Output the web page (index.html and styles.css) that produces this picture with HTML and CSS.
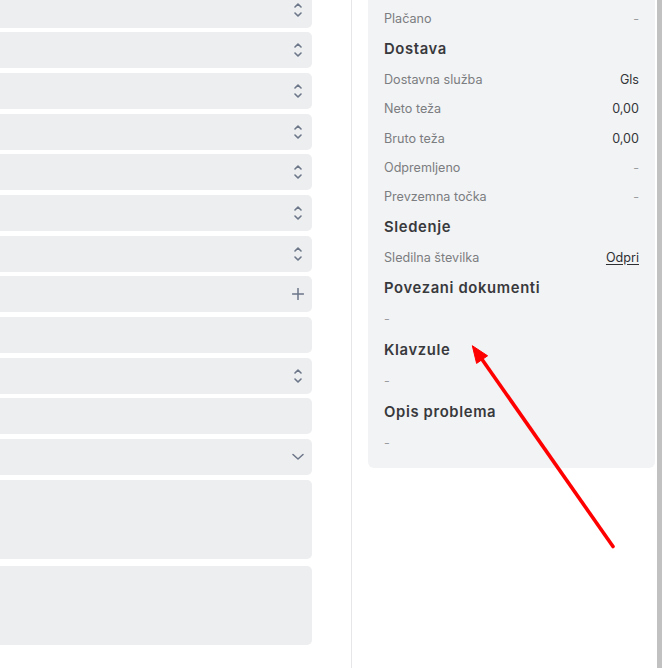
FILE: index.html
```html
<!DOCTYPE html>
<html lang="sl">
<head>
<meta charset="utf-8">
<title>Naročilo</title>
<link rel="stylesheet" href="styles.css">
</head>
<body>
<div class="page">
  <div class="left">
    <div class="fields">
      <div class="field first"><span class="updown"><svg viewBox="0 0 8 14" width="8" height="14"><path d="M1 4 L4 1 L7 4 M1 10 L4 13 L7 10" /></svg></span></div>
      <div class="field"><span class="updown"><svg viewBox="0 0 8 14" width="8" height="14"><path d="M1 4 L4 1 L7 4 M1 10 L4 13 L7 10" /></svg></span></div>
      <div class="field"><span class="updown"><svg viewBox="0 0 8 14" width="8" height="14"><path d="M1 4 L4 1 L7 4 M1 10 L4 13 L7 10" /></svg></span></div>
      <div class="field"><span class="updown"><svg viewBox="0 0 8 14" width="8" height="14"><path d="M1 4 L4 1 L7 4 M1 10 L4 13 L7 10" /></svg></span></div>
      <div class="field"><span class="updown"><svg viewBox="0 0 8 14" width="8" height="14"><path d="M1 4 L4 1 L7 4 M1 10 L4 13 L7 10" /></svg></span></div>
      <div class="field"><span class="updown"><svg viewBox="0 0 8 14" width="8" height="14"><path d="M1 4 L4 1 L7 4 M1 10 L4 13 L7 10" /></svg></span></div>
      <div class="field"><span class="updown"><svg viewBox="0 0 8 14" width="8" height="14"><path d="M1 4 L4 1 L7 4 M1 10 L4 13 L7 10" /></svg></span></div>
      <div class="field"><span class="plus"><svg viewBox="0 0 12 12" width="12" height="12"><path d="M6 0.5 V11.5 M0.5 6 H11.5" /></svg></span></div>
      <div class="field"></div>
      <div class="field"><span class="updown"><svg viewBox="0 0 8 14" width="8" height="14"><path d="M1 4 L4 1 L7 4 M1 10 L4 13 L7 10" /></svg></span></div>
      <div class="field"></div>
      <div class="field"><span class="chev"><svg viewBox="0 0 12 8" width="12" height="8"><path d="M1 1.5 L6 6 L11 1.5" /></svg></span></div>
      <div class="field area"></div>
      <div class="field area second"></div>
    </div>
  </div>
  <div class="right">
    <div class="panel">
      <div class="row"><span class="label">Plačano</span><span class="dash">-</span></div>
      <div class="heading">Dostava</div>
      <div class="row"><span class="label">Dostavna služba</span><span class="value">Gls</span></div>
      <div class="row"><span class="label">Neto teža</span><span class="value">0,00</span></div>
      <div class="row"><span class="label">Bruto teža</span><span class="value">0,00</span></div>
      <div class="row"><span class="label">Odpremljeno</span><span class="dash">-</span></div>
      <div class="row"><span class="label">Prevzemna točka</span><span class="dash">-</span></div>
      <div class="heading">Sledenje</div>
      <div class="row"><span class="label">Sledilna številka</span><a class="link" href="#">Odpri</a></div>
      <div class="heading">Povezani dokumenti</div>
      <div class="row tall"><span class="dash">-</span></div>
      <div class="heading">Klavzule</div>
      <div class="row tall"><span class="dash">-</span></div>
      <div class="heading">Opis problema</div>
      <div class="row tall"><span class="dash">-</span></div>
    </div>
  </div>
  <div class="strip"></div>
  <svg class="arrow" viewBox="0 0 662 668" width="662" height="668">
    <line x1="613" y1="546.5" x2="480" y2="356.5" />
    <polygon points="472.3,345.7 487.6,355.8 476.6,363.4" />
  </svg>
</div>
</body>
</html>
```
FILE: styles.css
```css
html, body {
  margin: 0;
  padding: 0;
  background: #ffffff;
}

body {
  font-family: Inter, "Liberation Sans", sans-serif;
  overflow: hidden;
}

.page {
  position: relative;
  width: 662px;
  height: 668px;
  display: flex;
  overflow: hidden;
}

.left {
  width: 351px;
  flex: none;
  border-right: 1px solid #e6e6e8;
  overflow: hidden;
}

.fields {
  display: flex;
  flex-direction: column;
  gap: 4.7px;
  margin-top: -8.5px;
  margin-left: -12px;
  margin-right: 39px;
}

.field {
  height: 36px;
  flex: none;
  background: #edeef0;
  border-radius: 5px;
  display: flex;
  align-items: center;
  justify-content: flex-end;
  padding-right: 6px;
  box-sizing: border-box;
}

.field.area {
  height: 79.5px;
}

.field.second {
  margin-top: 1.8px;
}

.field svg {
  display: block;
  fill: none;
  stroke: #6b7688;
  stroke-linecap: round;
  stroke-linejoin: round;
}

.updown svg {
  stroke-width: 1.6;
  margin-right: 4px;
}

.plus svg {
  stroke-width: 1.5;
  margin-right: 2px;
}

.chev svg {
  stroke-width: 1.5;
  margin-right: 2px;
}

.right {
  width: 289px;
  flex: none;
  padding-left: 16px;
  box-sizing: content-box;
}

.panel {
  width: 287px;
  box-sizing: border-box;
  background: #f2f3f5;
  border-radius: 0 0 6px 6px;
  margin-top: -10px;
  padding: 14.3px 16px 10px 16px;
}

.row {
  height: 29.4px;
  display: flex;
  align-items: center;
  justify-content: space-between;
  font-size: 12.6px;
}

.row.tall {
  height: 31px;
}

.label {
  color: #7b7d80;
}

.value {
  color: #333538;
}

.dash {
  color: #9a9c9f;
}

.link {
  color: #2d2f33;
  text-decoration: underline;
  text-underline-offset: 2px;
}

.heading {
  height: 31px;
  display: flex;
  align-items: center;
  font-size: 14.8px;
  font-weight: 600;
  color: #38393c;
  letter-spacing: 0.65px;
}

.strip {
  position: absolute;
  top: 0;
  right: 0;
  width: 5px;
  height: 668px;
  background: #c1c1c1;
}

.arrow {
  position: absolute;
  left: 0;
  top: 0;
  pointer-events: none;
}

.arrow line {
  stroke: #ff0000;
  stroke-width: 3.6;
  stroke-linecap: round;
}

.arrow polygon {
  fill: #ff0000;
  stroke: #ff0000;
  stroke-width: 1;
  stroke-linejoin: round;
}
```
